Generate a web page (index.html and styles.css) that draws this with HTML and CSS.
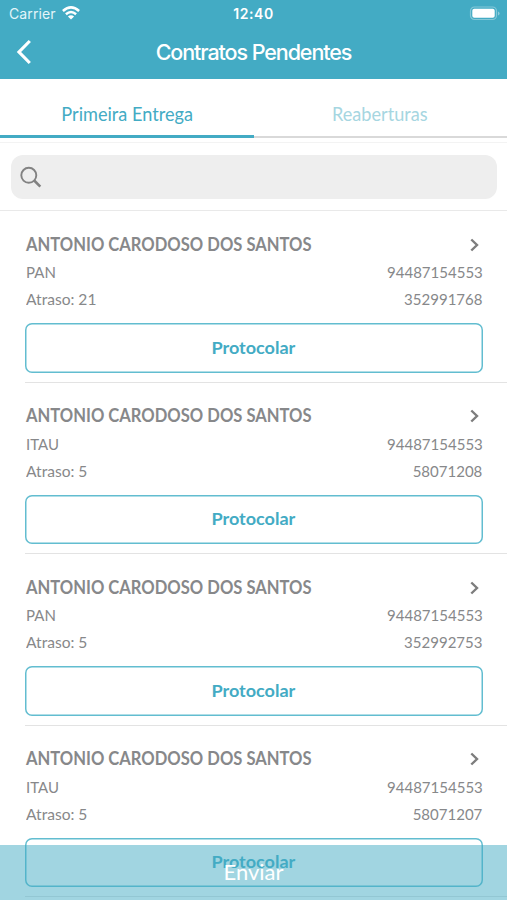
FILE: index.html
```html
<!DOCTYPE html>
<html lang="pt-BR">
<head>
<meta charset="utf-8">
<title>Contratos Pendentes</title>
<link rel="stylesheet" href="styles.css">
</head>
<body>
<div class="app">
  <header class="header">
    <div class="status">
      <div class="carrier"><span>Carrier</span>
        <svg class="wifi" width="18" height="14" viewBox="0 0 18 14" fill="none" stroke="#fff" stroke-width="2.500"><path d="M.9 5Q9-2.300 17.100 5M3.900 8.200Q9 3.800 14.100 8.200"/><path d="M9 13.500 5.900 10.400Q9 7.900 12.100 10.400Z" fill="#fff" stroke="none"/></svg>
      </div>
      <span class="time">12:40</span>
      <svg class="battery" width="32" height="16" viewBox="0 0 32 16"><rect x="1.500" y="1" width="26" height="12.500" rx="4" fill="none" stroke="#fff" stroke-opacity=".35" stroke-width="1.200"/><rect x="3.300" y="2.800" width="22.400" height="9" rx="2" fill="#fff"/><path d="M29 5.500v4Q30.600 8.800 30.600 7.500T29 5.500Z" fill="#fff" fill-opacity=".4"/></svg>
    </div>
    <div class="nav">
      <svg class="back" width="18" height="26" viewBox="0 0 18 26" fill="none" stroke="#fff" stroke-width="3.200"><path d="M15.800 2 5 13 15.800 24"/></svg>
      <h1 class="title">Contratos Pendentes</h1>
    </div>
  </header>
  <nav class="tabs">
    <div class="tab active"><span>Primeira Entrega</span></div>
    <div class="tab"><span>Reaberturas</span></div>
  </nav>
  <div class="search">
    <div class="field"><svg width="22" height="22" viewBox="0 0 22 22" fill="none" stroke="#828282"><circle cx="8.800" cy="9.300" r="7.500" stroke-width="1.900"/><path d="m14.200 14.500 6.100 6.100" stroke-width="2.600"/></svg></div>
  </div>
  <main class="list">
    <article class="item">
      <div class="row head"><h2 class="name">ANTONIO CARODOSO DOS SANTOS</h2><svg class="chevron" width="9" height="14" viewBox="0 0 9 14"><path d="m1.300 1.500 5.700 5.500-5.700 5.500"/></svg></div>
      <div class="row info"><span class="label">PAN</span><span class="number">94487154553</span></div>
      <div class="row info"><span class="label wide">Atraso: 21</span><span class="number">352991768</span></div>
      <button class="button"><span>Protocolar</span></button>
    </article>
    <article class="item">
      <div class="row head"><h2 class="name">ANTONIO CARODOSO DOS SANTOS</h2><svg class="chevron" width="9" height="14" viewBox="0 0 9 14"><path d="m1.300 1.500 5.700 5.500-5.700 5.500"/></svg></div>
      <div class="row info"><span class="label">ITAU</span><span class="number">94487154553</span></div>
      <div class="row info"><span class="label wide">Atraso: 5</span><span class="number">58071208</span></div>
      <button class="button"><span>Protocolar</span></button>
    </article>
    <article class="item">
      <div class="row head"><h2 class="name">ANTONIO CARODOSO DOS SANTOS</h2><svg class="chevron" width="9" height="14" viewBox="0 0 9 14"><path d="m1.300 1.500 5.700 5.500-5.700 5.500"/></svg></div>
      <div class="row info"><span class="label">PAN</span><span class="number">94487154553</span></div>
      <div class="row info"><span class="label wide">Atraso: 5</span><span class="number">352992753</span></div>
      <button class="button"><span>Protocolar</span></button>
    </article>
    <article class="item">
      <div class="row head"><h2 class="name">ANTONIO CARODOSO DOS SANTOS</h2><svg class="chevron" width="9" height="14" viewBox="0 0 9 14"><path d="m1.300 1.500 5.700 5.500-5.700 5.500"/></svg></div>
      <div class="row info"><span class="label">ITAU</span><span class="number">94487154553</span></div>
      <div class="row info"><span class="label wide">Atraso: 5</span><span class="number">58071207</span></div>
      <button class="button"><span>Protocolar</span></button>
    </article>
  </main>
  <div class="send"><span>Enviar</span></div>
</div>
</body>
</html>
```
FILE: styles.css
```css
* { box-sizing: border-box; }
body { margin: 0; background: #fff; font-family: Lato, sans-serif; color: #87888a; }
.app { position: relative; width: 507px; height: 900px; overflow: hidden; }
.header { height: 79px; background: #43abc4; color: #fff; font-family: Inter, sans-serif; }
.status { height: 27px; display: grid; grid-template-columns: 1fr auto 1fr; align-items: center; padding: 0 6px 0 9px; }
.carrier { display: flex; align-items: center; gap: 6px; font-size: 14px; color: #e4f5f9; letter-spacing: .1px; }
.wifi { margin-top: -1px; }
.time { margin-right: 3px; font-size: 14px; font-weight: 600; letter-spacing: .6px; }
.battery { justify-self: end; }
.nav { height: 52px; display: grid; grid-template-columns: 30px 1fr 30px; align-items: center; padding: 0 14px; }
.back { margin-top: -2px; }
.title { margin: 0; text-align: center; font-size: 21.5px; font-weight: 500; letter-spacing: -1.08px; line-height: 48px; padding-bottom: 2px; }
.tabs { height: 64px; display: flex; padding-bottom: 4px; border-bottom: 1px solid #f3f3f3; }
.tab { flex: 1; display: flex; align-items: center; justify-content: center; padding-top: 13px; font-size: 18.5px; color: #a6d6e1; border-bottom: 2px solid #d9d9d9; }
.tab.active { padding-top: 14px; color: #43abc4; border-bottom: 3px solid #43abc4; }
.tab span { transform: scaleX(.98); }
.search { height: 68px; padding: 12px 10px 12px 11px; border-bottom: 1px solid #e9e9e9; }
.field { height: 44px; border-radius: 12px; background: #eee; padding: 11px 9px; }
.field svg { display: block; }
.list { padding-left: 25px; }
.item { height: 171.5px; padding: 19px 24px 0 0; border-bottom: 1px solid #e3e3e3; }
.row { display: flex; justify-content: space-between; align-items: center; }
.head { height: 27px; padding-right: 4px; }
.name { margin: 0 0 0 .5px; font-size: 18.3px; font-weight: 700; transform: scaleX(.907); transform-origin: 0 50%; white-space: nowrap; }
.chevron { margin-top: 2px; fill: none; stroke: #7d7d7d; stroke-width: 2.4; }
.info { height: 27px; padding: 2px .5px 0 .5px; font-size: 15.8px; }
.label { transform: scaleX(.95); transform-origin: 0 50%; }
.label.wide { transform: scaleX(.985); }
.number { transform: scaleX(.95); transform-origin: 100% 50%; }
.button { display: flex; align-items: center; justify-content: center; width: 458px; height: 49.5px; margin: 12px 0 0; padding: 0 2px 2px 0; background: transparent; border: 0; box-shadow: inset 0 0 0 1.5px #62bdd0; border-radius: 7px; color: #43abc4; font: 700 17.8px Lato, sans-serif; }
.button span { transform: scaleX(1.015); }
.send { position: absolute; left: 0; right: 0; bottom: 0; height: 55px; padding-bottom: 3px; background: rgba(67, 171, 196, .5); color: #fff; font-size: 22px; display: flex; align-items: center; justify-content: center; }
```
